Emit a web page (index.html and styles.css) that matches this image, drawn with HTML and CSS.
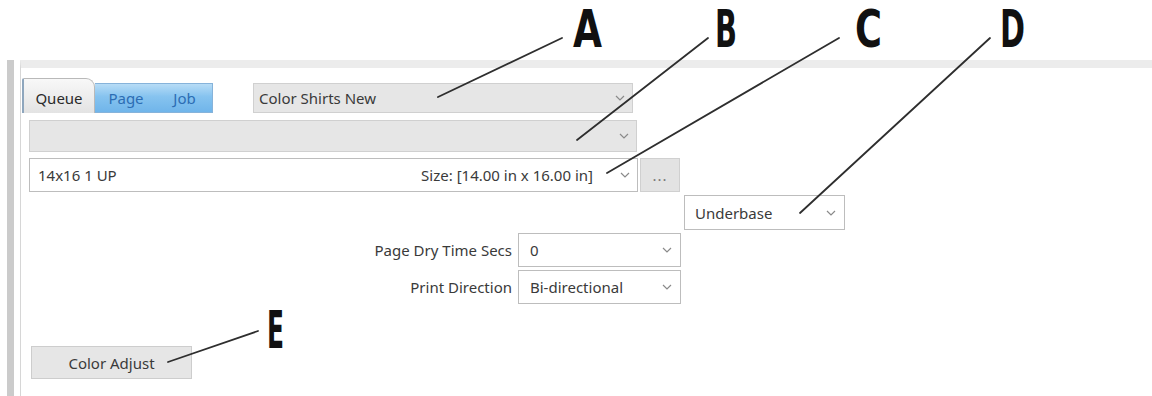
FILE: index.html
```html
<!DOCTYPE html>
<html>
<head>
<meta charset="utf-8">
<title>Queue settings</title>
<link rel="stylesheet" href="styles.css">
</head>
<body>
<div class="screen">
  <div class="rail"></div>
  <div class="panel">
    <div class="row-top">
      <div class="tabs">
        <div class="tab tab-active">Queue</div>
        <div class="tab-group">
          <div class="tab tab-blue tab-page">Page</div>
          <div class="tab tab-blue tab-job">Job</div>
        </div>
      </div>
      <div class="combo combo-gray combo-a">
        <span class="value">Color Shirts New</span>
        <svg class="chev" viewBox="0 0 10 6"><polyline points="1,1 5,5 9,1"/></svg>
      </div>
    </div>
    <div class="combo combo-gray combo-b">
      <span class="value"></span>
      <svg class="chev" viewBox="0 0 10 6"><polyline points="1,1 5,5 9,1"/></svg>
    </div>
    <div class="row-size">
      <div class="combo combo-white combo-c">
        <span class="value">14x16 1 UP</span>
        <span class="size">Size: [14.00 in x 16.00 in]</span>
        <svg class="chev" viewBox="0 0 10 6"><polyline points="1,1 5,5 9,1"/></svg>
      </div>
      <button class="btn btn-dots">...</button>
    </div>
    <div class="combo combo-white combo-d">
      <span class="value">Underbase</span>
      <svg class="chev" viewBox="0 0 10 6"><polyline points="1,1 5,5 9,1"/></svg>
    </div>
    <div class="form">
      <span class="label">Page Dry Time Secs</span>
      <div class="combo combo-white combo-field">
        <span class="value">0</span>
        <svg class="chev" viewBox="0 0 10 6"><polyline points="1,1 5,5 9,1"/></svg>
      </div>
      <span class="label">Print Direction</span>
      <div class="combo combo-white combo-field">
        <span class="value">Bi-directional</span>
        <svg class="chev" viewBox="0 0 10 6"><polyline points="1,1 5,5 9,1"/></svg>
      </div>
    </div>
    <button class="btn btn-adjust">Color Adjust</button>
  </div>

  <svg class="annot" viewBox="0 0 1152 396" width="1152" height="396">
    <g class="leaders">
      <line x1="562" y1="38" x2="438" y2="97"/>
      <line x1="708" y1="38" x2="577" y2="140"/>
      <line x1="839" y1="38" x2="607" y2="173"/>
      <line x1="990" y1="38" x2="800" y2="213"/>
      <line x1="258" y1="331" x2="168" y2="362"/>
    </g>
    <g class="letters">
      <text x="573" y="47" textLength="29" lengthAdjust="spacingAndGlyphs">A</text>
      <text x="715" y="47" textLength="22" lengthAdjust="spacingAndGlyphs">B</text>
      <text x="855" y="47" textLength="27" lengthAdjust="spacingAndGlyphs">C</text>
      <text x="1000" y="47" textLength="25" lengthAdjust="spacingAndGlyphs">D</text>
      <text x="267" y="348" textLength="17" lengthAdjust="spacingAndGlyphs">E</text>
    </g>
  </svg>
</div>
</body>
</html>
```

FILE: styles.css
```css
html, body {
  margin: 0;
  padding: 0;
  background: #ffffff;
}

body {
  width: 1152px;
  height: 396px;
  overflow: hidden;
  font-family: "Noto Sans", "Open Sans", "Liberation Sans", sans-serif;
  font-size: 15px;
  color: #3a3a3a;
}

.screen {
  position: relative;
  display: flex;
  box-sizing: border-box;
  width: 1152px;
  height: 396px;
  padding-top: 60px;
}

.rail {
  margin-left: 7px;
  width: 7px;
  background: #cbcbcb;
}

.panel {
  flex: 1;
  margin-left: 6px;
  border-left: 1px solid #d6d6d6;
  border-top: 8px solid #ececec;
  display: flex;
  flex-direction: column;
  align-items: flex-start;
}

/* Top row: tabs + profile combo */
.row-top {
  display: flex;
  align-items: flex-start;
  margin-top: 10px;
}

.tabs {
  display: flex;
  align-items: flex-end;
  height: 35px;
  margin-left: 1px;
}

.tab {
  display: flex;
  align-items: center;
  justify-content: center;
  box-sizing: border-box;
}

.tab-active {
  width: 73px;
  height: 35px;
  padding-top: 3px;
  border: 1px solid #b9b9b9;
  border-bottom: none;
  border-left: 2px solid #8ea6bd;
  border-radius: 2px 9px 0 0;
  background: linear-gradient(#f8f8f8, #e3e3e3);
  color: #2a2a2a;
}

.tab-group {
  display: flex;
  height: 30px;
  box-sizing: border-box;
  border: 1px solid #86b3da;
  border-left: none;
  background: linear-gradient(#b7dcf6, #86c3ef 45%, #70b5ea);
}

.tab-blue {
  height: 100%;
  color: #2c6db4;
}

.tab-page {
  width: 62px;
}

.tab-job {
  width: 55px;
}

/* Combo boxes */
.combo {
  display: flex;
  align-items: center;
  box-sizing: border-box;
  border: 1px solid #c9c9c9;
  padding: 0 7px 0 5px;
}

.combo-gray {
  background: #e6e6e6;
  border-color: #d0d0d0;
}

.combo-white {
  background: #ffffff;
  border-color: #bdbdbd;
}

.combo .value {
  flex: 1;
  white-space: nowrap;
}

.chev {
  width: 10px;
  height: 6px;
  flex: none;
}

.chev polyline {
  fill: none;
  stroke: #8a8a8a;
  stroke-width: 1.2;
}

.combo-a {
  margin-left: 40px;
  margin-top: 5px;
  width: 380px;
  height: 30px;
}

.combo-b {
  margin-left: 8px;
  margin-top: 7px;
  width: 608px;
  height: 32px;
}

.row-size {
  display: flex;
  gap: 2px;
  margin-left: 8px;
  margin-top: 6px;
}

.combo-c {
  width: 609px;
  height: 34px;
  padding-left: 8px;
}

.combo-c .size {
  margin-right: 27px;
  white-space: nowrap;
}

.combo-d {
  margin-left: 663px;
  margin-top: 3px;
  width: 161px;
  height: 35px;
  padding-left: 10px;
  padding-right: 8px;
}

/* Form grid */
.form {
  display: grid;
  grid-template-columns: 491px 163px;
  grid-auto-rows: 34px;
  column-gap: 6px;
  row-gap: 3px;
  margin-top: 3px;
}

.form .label {
  align-self: center;
  justify-self: end;
  white-space: nowrap;
}

.combo-field {
  height: 100%;
  padding-left: 11px;
  padding-right: 8px;
}

/* Buttons */
.btn {
  font: inherit;
  color: #3a3a3a;
  box-sizing: border-box;
  background: #e3e3e3;
  border: 1px solid #d0d0d0;
  padding: 0;
  margin: 0;
}

.btn-dots {
  width: 40px;
  height: 34px;
  color: #777777;
  letter-spacing: 1px;
}

.btn-adjust {
  margin-left: 10px;
  margin-top: 42px;
  width: 161px;
  height: 33px;
  background: #e6e6e6;
  border-color: #cdcdcd;
}

/* Annotation overlay */
.annot {
  position: absolute;
  top: 0;
  left: 0;
  pointer-events: none;
}

.leaders line {
  stroke: #2e2e2e;
  stroke-width: 1.8;
  stroke-linecap: round;
}

.letters text {
  font-family: "DejaVu Sans", "Liberation Sans", sans-serif;
  font-weight: bold;
  font-size: 52px;
  fill: #111111;
}
```
